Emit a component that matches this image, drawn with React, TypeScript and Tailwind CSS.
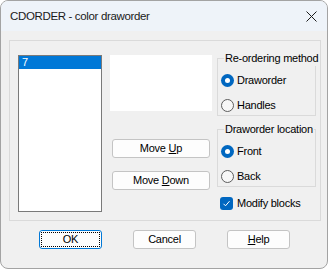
import React from 'react';

function Radio({ checked, label }: { checked?: boolean; label: string }) {
  return (
    <div className="flex items-center h-[15px] pl-[3px] gap-[3px]">
      {checked ? (
        <span className="w-[13px] h-[13px] rounded-full bg-[#0067c0] flex items-center justify-center">
          <span className="w-[5px] h-[5px] rounded-full bg-white" />
        </span>
      ) : (
        <span className="w-[13px] h-[13px] rounded-full border border-[#5d5d5d] bg-[#f7f7f7]" />
      )}
      <span>{label}</span>
    </div>
  );
}

function Btn({ children, className = '' }: { children: React.ReactNode; className?: string }) {
  return (
    <div
      className={`h-[19px] flex items-center justify-center rounded-[3px] border border-[#c4c4c4] bg-[#fdfdfd] ${className}`}
    >
      {children}
    </div>
  );
}

export default function App() {
  return (
    <div
      className="w-[328px] h-[270px] bg-white text-[11px] tracking-[-0.25px] leading-[15px] text-black"
      style={{ fontFamily: '"Liberation Sans", Arial, sans-serif' }}
    >
      <div className="w-[328px] h-[269px] border border-[#a3a3a3] rounded-[8px] overflow-hidden bg-[#f0f0f0] flex flex-col">
        {/* title bar */}
        <div className="h-[30px] bg-[#eef3f9] flex items-center justify-between pl-[9px] pr-[9px] shrink-0">
          <span className="text-[11.5px] tracking-[-0.35px] text-[#1a1a1a]">CDORDER - color draworder</span>
          <svg width="11" height="11" viewBox="0 0 11 11" className="mr-[1px]">
            <path d="M0.5 0.5 L10.5 10.5 M10.5 0.5 L0.5 10.5" stroke="#1b1b1b" strokeWidth="1" />
          </svg>
        </div>

        <div className="px-[8px] pt-[9px]">
          {/* main group */}
          <div className="w-[312px] h-[181px] border border-[#dadada] flex pl-[8px] pt-[14px]">
            <div className="w-[84px] h-[157px] border border-[#7a7a7a] bg-white">
              <div className="h-[13px] bg-[#0078d7] text-white pl-[3px] leading-[13px]">7</div>
            </div>

            <div className="ml-[8px] w-[102px] flex flex-col">
              <div className="h-[56px] bg-white" />
              <Btn className="ml-[2px] w-[98px] mt-[28px]">
                Move&nbsp;<span className="underline">U</span>p
              </Btn>
              <Btn className="ml-[2px] w-[98px] mt-[13px]">
                Move&nbsp;<span className="underline">D</span>own
              </Btn>
            </div>

            <div className="ml-[5px] w-[99px] flex flex-col">
              <div className="relative mt-[3px] h-[58px] border border-[#dadada] pt-[14px]">
                <span className="absolute top-[-8px] left-[6px] px-[1px] bg-[#f0f0f0] whitespace-nowrap">
                  Re-ordering method
                </span>
                <Radio checked label="Draworder" />
                <div className="mt-[10px]">
                  <Radio label="Handles" />
                </div>
              </div>

              <div className="relative mt-[13px] h-[58px] border border-[#dadada] pt-[14px]">
                <span className="absolute top-[-8px] left-[6px] px-[1px] bg-[#f0f0f0] whitespace-nowrap">
                  Draworder location
                </span>
                <Radio checked label="Front" />
                <div className="mt-[10px]">
                  <Radio label="Back" />
                </div>
              </div>

              <div className="mt-[9px] ml-[3px] h-[15px] flex items-center gap-[4px]">
                <span className="w-[13px] h-[13px] rounded-[3px] bg-[#0067c0] flex items-center justify-center">
                  <svg width="9" height="9" viewBox="0 0 9 9">
                    <path d="M1.5 4.8 L3.5 6.8 L7.5 2.2" fill="none" stroke="white" strokeWidth="1" />
                  </svg>
                </span>
                <span>Modify blocks</span>
              </div>
            </div>
          </div>

          {/* bottom buttons */}
          <div className="flex gap-[31px] ml-[30px] mt-[9px]">
            <div className="w-[63px] h-[19px] rounded-[3px] border border-[#0078d7] bg-[#fdfdfd] p-[1px]">
              <div className="w-full h-full border border-dotted border-black flex items-center justify-center">
                OK
              </div>
            </div>
            <Btn className="w-[63px]">Cancel</Btn>
            <Btn className="w-[63px]">
              <span className="underline">H</span>elp
            </Btn>
          </div>
        </div>
      </div>
    </div>
  );
}
